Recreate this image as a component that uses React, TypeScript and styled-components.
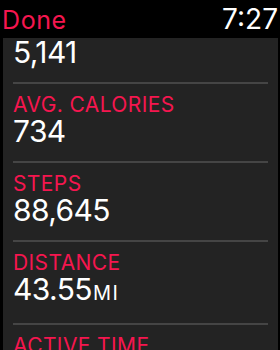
import React from "react";
import styled, { createGlobalStyle } from "styled-components";

const Global = createGlobalStyle`
  html, body { margin: 0; padding: 0; background: #000; }
  body { font-family: Inter, "Noto Sans", sans-serif; -webkit-font-smoothing: antialiased; }
`;

const Screen = styled.div`
  width: 280px;
  height: 350px;
  display: flex;
  flex-direction: column;
  background: #000;
  overflow: hidden;
`;

const Header = styled.header`
  height: 38px;
  flex: 0 0 38px;
  display: flex;
  justify-content: space-between;
  align-items: baseline;
  padding: 5px 2px 0 2px;
  box-sizing: border-box;
`;

const DoneButton = styled.span`
  color: #f5164f;
  font-size: 25px;
  line-height: 28px;
  letter-spacing: 0.6px;
`;

const Clock = styled.span`
  color: #fff;
  font-size: 28px;
  line-height: 28px;
`;

const Panel = styled.main`
  flex: 1;
  margin: 0 2px 0 3px;
  background: #232323;
  overflow: hidden;
`;

const List = styled.ul`
  list-style: none;
  margin: -2px 0 0;
  padding: 0;
`;

const Row = styled.li<{ $partial?: boolean }>`
  margin: 0 10px;
  padding: ${(p) => (p.$partial ? "0" : "10px")} 0 15px;
  border-bottom: 2px solid #454545;
`;

const Label = styled.div`
  color: #f5164f;
  font-size: 21px;
  line-height: 21px;
  letter-spacing: 0.4px;
  white-space: nowrap;
`;

const Value = styled.div`
  color: #fff;
  font-size: 30px;
  line-height: 30px;
  margin-top: 1px;
  letter-spacing: -0.6px;
  white-space: nowrap;
`;

const Unit = styled.span`
  font-size: 20px;
  letter-spacing: 1.5px;
  margin-left: 1px;
`;

type Stat = { label?: string; value: string; unit?: string };

const stats: Stat[] = [
  { value: "5,141" },
  { label: "AVG. CALORIES", value: "734" },
  { label: "STEPS", value: "88,645" },
  { label: "DISTANCE", value: "43.55", unit: "MI" },
  { label: "ACTIVE TIME", value: "" },
];

export default function App() {
  return (
    <>
      <Global />
      <Screen>
        <Header>
          <DoneButton>Done</DoneButton>
          <Clock>7:27</Clock>
        </Header>
        <Panel>
          <List>
            {stats.map((s, i) => (
              <Row key={i} $partial={!s.label}>
                {s.label && <Label>{s.label}</Label>}
                {s.value && (
                  <Value>
                    {s.value}
                    {s.unit && <Unit>{s.unit}</Unit>}
                  </Value>
                )}
              </Row>
            ))}
          </List>
        </Panel>
      </Screen>
    </>
  );
}
